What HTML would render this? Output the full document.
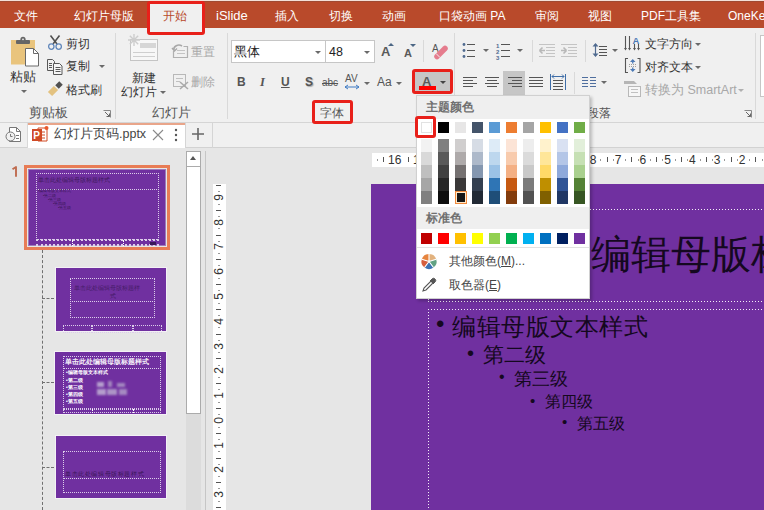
<!DOCTYPE html>
<html><head><meta charset="utf-8">
<style>
*{margin:0;padding:0;box-sizing:border-box}
html,body{width:764px;height:510px;overflow:hidden;background:#E6E6E6;font-family:"Liberation Sans",sans-serif;color:#444;position:relative}
.a{position:absolute}
.t{position:absolute;white-space:nowrap;line-height:1}
.tab{position:absolute;top:10px;font-size:12px;color:#fff;line-height:1;white-space:nowrap}
.sep{position:absolute;width:1px;background:#D9D9D9}
.lbl{position:absolute;font-size:12px;color:#555;line-height:1;white-space:nowrap}
.arr{position:absolute;width:0;height:0;border-left:3px solid transparent;border-right:3px solid transparent;border-top:3px solid #6A6A6A}
.redbox{position:absolute;border:3px solid #E8201A;border-radius:3px;z-index:50}
.sw{position:absolute;width:12px}
.dot{position:absolute;border:1px dotted #fff}
svg{position:absolute;overflow:visible}
</style></head><body>

<!-- ============ TAB BAR ============ -->
<div class="a" style="left:0;top:0;width:764px;height:1px;background:#F3E0D8"></div>
<div class="a" style="left:0;top:1px;width:764px;height:27px;background:#B94A2B"></div>
<div class="a" style="left:0;top:1px;width:764px;height:1px;background:#A04A32"></div>
<div class="tab" style="left:14px">文件</div>
<div class="tab" style="left:74px">幻灯片母版</div>
<div class="a" style="left:149px;top:4px;width:54px;height:30px;background:#F0F0F0;z-index:2"></div>
<div class="tab" style="left:163px;color:#B94A2B;z-index:3">开始</div>
<div class="redbox" style="left:147px;top:1px;width:58px;height:34px"></div>
<div class="tab" style="left:216px;top:9px;font-size:13px">iSlide</div>
<div class="tab" style="left:275px">插入</div>
<div class="tab" style="left:329px">切换</div>
<div class="tab" style="left:382px">动画</div>
<div class="tab" style="left:439px">口袋动画 PA</div>
<div class="tab" style="left:535px">审阅</div>
<div class="tab" style="left:588px">视图</div>
<div class="tab" style="left:641px">PDF工具集</div>
<div class="tab" style="left:728px">OneKey</div>

<!-- ============ RIBBON ============ -->
<div class="a" style="left:0;top:28px;width:764px;height:94px;background:#F0F0F0"></div>
<div class="a" style="left:0;top:122px;width:764px;height:1px;background:#D5D5D5"></div>

<!-- clipboard group -->
<svg style="left:10px;top:36px" width="32" height="32" viewBox="0 0 32 32">
  <rect x="1" y="4" width="24" height="24.5" fill="#E9C47D"/>
  <rect x="6" y="4" width="14" height="4" rx="1" fill="#666"/>
  <circle cx="13" cy="3.3" r="2.6" fill="#666"/>
  <circle cx="13" cy="3.3" r="0.9" fill="#F0F0F0"/>
  <path d="M15.5 12.5 h8 l5 5 v12.5 h-13 z" fill="#fff" stroke="#6A6A6A" stroke-width="1"/>
  <path d="M23.5 12.5 v5 h5" fill="none" stroke="#6A6A6A" stroke-width="1"/>
</svg>
<div class="lbl" style="left:10px;top:71px;font-size:12.5px;color:#333">粘贴</div>
<div class="arr" style="left:21px;top:90px"></div>
<svg style="left:47px;top:35px" width="16" height="16" viewBox="0 0 16 16">
  <path d="M3.5 0.5 L10 9 M12.5 0.5 L6 9" stroke="#505050" stroke-width="1.6"/>
  <circle cx="4.3" cy="11.6" r="2.7" fill="#F0F0F0" stroke="#6288BB" stroke-width="1.3"/>
  <circle cx="11.7" cy="11.6" r="2.7" fill="#F0F0F0" stroke="#6288BB" stroke-width="1.3"/>
</svg>
<div class="lbl" style="left:66px;top:38px;color:#333">剪切</div>
<svg style="left:46px;top:58px" width="18" height="17" viewBox="0 0 18 17">
  <path d="M1.5 1.5 h5 l2 2 v9 h-7 z" fill="#F0F0F0" stroke="#585858"/>
  <path d="M3 5.5h3M3 7.5h3M3 9.5h3" stroke="#585858"/>
  <path d="M7.5 5.5 h6 l2.5 2.5 v8.5 h-8.5 z" fill="#F5F5F5" stroke="#585858"/>
  <path d="M9.5 9.5h5M9.5 11.5h5M9.5 13.5h5" stroke="#585858"/>
</svg>
<div class="lbl" style="left:66px;top:60px;color:#333">复制</div>
<div class="arr" style="left:99px;top:65px"></div>
<svg style="left:46px;top:81px" width="18" height="16" viewBox="0 0 18 16">
  <path d="M4 13 L10 7" stroke="#E3C280" stroke-width="6" stroke-linecap="butt"/>
  <path d="M11 6 L15 2" stroke="#505050" stroke-width="5" stroke-linecap="butt"/>
</svg>
<div class="lbl" style="left:66px;top:84px;color:#333">格式刷</div>
<div class="lbl" style="left:29px;top:107px;font-size:12.5px">剪贴板</div>
<svg style="left:103px;top:110px" width="8" height="8" viewBox="0 0 8 8">
  <path d="M0.5 0.5 h7 v7" fill="none" stroke="#888"/>
  <path d="M2 2 L6.5 6.5 M3.5 6.5 h3 v-3" fill="none" stroke="#666"/>
</svg>
<div class="sep" style="left:115px;top:33px;height:86px"></div>

<!-- slides group -->
<svg style="left:127px;top:33px" width="34" height="30" viewBox="0 0 34 30">
  <rect x="3.5" y="6.5" width="27" height="21" fill="#F7F7F7" stroke="#C4C4C4"/>
  <rect x="13" y="10" width="16" height="5" fill="#D6D6D6"/>
  <path d="M6 19.5h22M6 23.5h22" stroke="#CFCFCF"/>
  <path d="M7 1 v12 M1 7 h12 M2.8 2.8 l8.4 8.4 M11.2 2.8 l-8.4 8.4" stroke="#CDCDCD" stroke-width="1.4"/>
</svg>
<div class="lbl" style="left:132px;top:72px;font-size:12px;color:#333">新建</div>
<div class="lbl" style="left:121px;top:86px;font-size:12px;color:#333">幻灯片</div>
<div class="arr" style="left:160px;top:91px"></div>
<svg style="left:171px;top:43px" width="18" height="16" viewBox="0 0 18 16">
  <path d="M2.5 8 v6.5 h14 v-11 h-4" fill="none" stroke="#B0B0B0" stroke-width="1.2"/>
  <path d="M6 7.5h8M6 10.5h8" stroke="#C4C4C4"/>
  <path d="M3 7 a5 4 0 0 1 8 -4" fill="none" stroke="#A8A8A8" stroke-width="1.6"/>
  <path d="M1 5 l2.5 3 l2.5 -2.5" fill="none" stroke="#A8A8A8" stroke-width="1.4"/>
</svg>
<div class="lbl" style="left:191px;top:46px;font-size:12px;color:#A8A8A8">重置</div>
<svg style="left:172px;top:73px" width="18" height="17" viewBox="0 0 18 17">
  <rect x="1.5" y="1.5" width="12" height="12" fill="none" stroke="#B8B8B8"/>
  <path d="M4 5.5h7M4 8.5h4" stroke="#C0C0C0"/>
  <path d="M8 9 L16 16 M16 9 L8 16" stroke="#AAAAAA" stroke-width="1.6"/>
</svg>
<div class="lbl" style="left:191px;top:76px;font-size:12px;color:#A8A8A8">删除</div>
<div class="lbl" style="left:152px;top:107px;font-size:12.5px">幻灯片</div>
<div class="sep" style="left:227px;top:33px;height:86px"></div>

<!-- font group -->
<div class="a" style="left:231px;top:40px;width:95px;height:23px;background:#fff;border:1px solid #C6C6C6"></div>
<div class="lbl" style="left:234px;top:46px;font-size:12.5px;color:#222">黑体</div>
<div class="arr" style="left:315px;top:51px"></div>
<div class="a" style="left:325px;top:40px;width:50px;height:23px;background:#fff;border:1px solid #C6C6C6"></div>
<div class="lbl" style="left:329px;top:46px;font-size:12.5px;color:#222">48</div>
<div class="arr" style="left:364px;top:51px"></div>
<div class="t" style="left:381px;top:45px;font-size:13px;font-weight:bold;color:#5A5A5A">A</div>
<div class="a" style="left:388px;top:43px;width:0;height:0;border-left:3.5px solid transparent;border-right:3.5px solid transparent;border-bottom:3.5px solid #4C6785"></div>
<div class="t" style="left:404px;top:48px;font-size:11px;font-weight:bold;color:#5A5A5A">A</div>
<div class="a" style="left:410px;top:43.5px;width:0;height:0;border-left:3.5px solid transparent;border-right:3.5px solid transparent;border-top:3.5px solid #4C6785"></div>
<div class="sep" style="left:423px;top:40px;height:22px"></div>
<svg style="left:430px;top:42px" width="20" height="20" viewBox="0 0 20 20">
  <text x="2" y="10" font-size="10" font-family="Liberation Sans" fill="#555">A</text>
  <path d="M7 14.5 L15 6.5" stroke="#E57C8D" stroke-width="5.5" stroke-linecap="round"/>
  <path d="M6 11.5 L10 15.5" stroke="#F0F0F0" stroke-width="1"/>
</svg>
<div class="sep" style="left:454px;top:33px;height:86px"></div>

<div class="t" style="left:237px;top:76px;font-size:12px;font-weight:bold;color:#555">B</div>
<div class="t" style="left:260px;top:76px;font-size:12.5px;font-style:italic;font-weight:bold;color:#555;font-family:'Liberation Serif',serif">I</div>
<div class="t" style="left:281px;top:76px;font-size:12px;font-weight:bold;color:#555;text-decoration:underline">U</div>
<div class="t" style="left:305px;top:76px;font-size:12px;font-weight:bold;color:#555;text-shadow:1px 1px 1px #aaa">S</div>
<div class="t" style="left:322px;top:78px;font-size:10px;color:#555;text-decoration:line-through">abc</div>
<div class="t" style="left:345px;top:74px;font-size:10px;color:#555">AV</div>
<svg style="left:344px;top:84px" width="16" height="6" viewBox="0 0 16 6">
  <path d="M1 3h14 M1 3 l3 -2 M1 3 l3 2 M15 3 l-3 -2 M15 3 l-3 2" stroke="#3F7BC3" stroke-width="1"/>
</svg>
<div class="arr" style="left:364px;top:82px"></div>
<div class="t" style="left:377px;top:76px;font-size:12px;color:#555">Aa</div>
<div class="arr" style="left:396px;top:82px"></div>

<!-- font color button -->
<div class="a" style="left:415px;top:72px;width:35px;height:20px;background:#C6C6C6"></div>
<div class="t" style="left:422px;top:75px;font-size:13px;font-weight:bold;color:#5A5A5A">A</div>
<div class="a" style="left:419px;top:86px;width:17px;height:4px;background:#FF0000"></div>
<div class="arr" style="left:440px;top:81px;border-top-color:#444"></div>
<div class="redbox" style="left:412px;top:69px;width:41px;height:25px"></div>

<div class="lbl" style="left:320px;top:107px">字体</div>
<div class="redbox" style="left:312px;top:100px;width:41px;height:24px"></div>
<svg style="left:441px;top:110px" width="8" height="8" viewBox="0 0 8 8">
  <path d="M0.5 0.5 h7 v7" fill="none" stroke="#888"/>
  <path d="M2 2 L6.5 6.5 M3.5 6.5 h3 v-3" fill="none" stroke="#666"/>
</svg>

<!-- paragraph group -->
<svg style="left:462px;top:42px" width="16" height="16" viewBox="0 0 16 16">
  <circle cx="2" cy="2.5" r="1.4" fill="#4F6A8F"/><circle cx="2" cy="8.5" r="1.4" fill="#4F6A8F"/><circle cx="2" cy="14.5" r="1.4" fill="#4F6A8F"/>
  <path d="M5 2.5h8M5 8.5h8M5 14.5h8" stroke="#555"/>
</svg>
<div class="arr" style="left:483px;top:49px"></div>
<svg style="left:496px;top:42px" width="16" height="16" viewBox="0 0 16 16">
  <text x="0" y="5.5" font-size="6" font-weight="bold" font-family="Liberation Sans" fill="#4F6A8F">1</text>
  <text x="0" y="11.5" font-size="6" font-weight="bold" font-family="Liberation Sans" fill="#4F6A8F">2</text>
  <text x="0" y="17.5" font-size="6" font-weight="bold" font-family="Liberation Sans" fill="#4F6A8F">3</text>
  <path d="M5 2.5h9M5 8.5h9M5 14.5h9" stroke="#555"/>
</svg>
<div class="arr" style="left:517px;top:49px"></div>
<div class="sep" style="left:532px;top:40px;height:22px"></div>
<svg style="left:538px;top:43px" width="18" height="15" viewBox="0 0 18 15">
  <path d="M1 1.5h16M8 4.5h9M8 7.5h9M8 10.5h9M1 13.5h16" stroke="#C4C4C4"/>
  <path d="M1.5 7.5h5.5 M1.5 7.5l3 -3 M1.5 7.5l3 3" stroke="#B8B8B8" stroke-width="1.6" fill="none"/>
</svg>
<svg style="left:560px;top:43px" width="18" height="15" viewBox="0 0 18 15">
  <path d="M1 1.5h16M8 4.5h9M8 7.5h9M8 10.5h9M1 13.5h16" stroke="#C4C4C4"/>
  <path d="M1 7.5h5.5 M6.5 7.5l-3 -3 M6.5 7.5l-3 3" stroke="#B8B8B8" stroke-width="1.6" fill="none"/>
</svg>
<div class="sep" style="left:585px;top:40px;height:22px"></div>
<svg style="left:592px;top:42px" width="16" height="16" viewBox="0 0 16 16">
  <path d="M3.5 2v12" stroke="#4F6A8F" stroke-width="1.2"/>
  <path d="M0.5 4.5 L3.5 1 L6.5 4.5 z M0.5 11.5 L3.5 15 L6.5 11.5 z" fill="#4F6A8F"/>
  <path d="M7 4.5h8M7 7.5h8M7 10.5h8M7 13.5h8" stroke="#555"/>
</svg>
<div class="arr" style="left:612px;top:49px"></div>

<svg style="left:624px;top:35px" width="18" height="17" viewBox="0 0 18 17">
  <path d="M1.5 1v13M5.5 1v13M10.5 9v5M14.5 9v5" stroke="#555" stroke-width="1.1"/>
  <path d="M0 13l1.5 2.5l1.5 -2.5zM4 13l1.5 2.5l1.5 -2.5zM9 13l1.5 2.5l1.5 -2.5zM13 13l1.5 2.5l1.5 -2.5z" fill="#555"/>
  <text x="8.5" y="8.5" font-size="9.5" font-weight="bold" font-family="Liberation Sans" fill="#4C7AB5">A</text>
</svg>
<div class="lbl" style="left:645px;top:38px;font-size:12px;color:#333">文字方向</div>
<div class="arr" style="left:695px;top:43px"></div>
<svg style="left:624px;top:57px" width="18" height="17" viewBox="0 0 18 17">
  <path d="M4 1.5h-2.5v14h2.5 M13.5 1.5h2.5v14h-2.5" stroke="#555" fill="none" stroke-width="1.1"/>
  <path d="M8.75 3v3.5 M8.75 10.5v3.5" stroke="#4C7AB5" stroke-width="1.3"/>
  <path d="M6 5l2.75 -3l2.75 3zM6 12l2.75 3l2.75 -3z" fill="#4C7AB5"/>
  <path d="M5 7.5h7.5M5 9.5h7.5" stroke="#8A8A8A" stroke-width="0.8" stroke-dasharray="1 1"/>
</svg>
<div class="lbl" style="left:645px;top:61px;font-size:12px;color:#333">对齐文本</div>
<div class="arr" style="left:695px;top:66px"></div>
<svg style="left:623px;top:80px" width="19" height="18" viewBox="0 0 19 18">
  <path d="M1 1h10l3 3h-13z" fill="#B5B5B5"/>
  <rect x="5.5" y="6.5" width="12" height="10" fill="#F6F6F6" stroke="#B8B8B8"/>
  <path d="M8 9.5h7M8 12.5h7" stroke="#C0C0C0"/>
</svg>
<div class="lbl" style="left:645px;top:84px;font-size:12.5px;color:#A8A8A8">转换为 SmartArt</div>
<div class="arr" style="left:738px;top:89px;border-top-color:#B0B0B0"></div>

<svg style="left:462px;top:76px" width="16" height="12" viewBox="0 0 16 12">
  <path d="M1 1.5h14M1 4.5h10M1 7.5h14M1 10.5h10" stroke="#555"/>
</svg>
<svg style="left:484px;top:76px" width="16" height="12" viewBox="0 0 16 12">
  <path d="M1 1.5h14M3 4.5h10M1 7.5h14M3 10.5h10" stroke="#555"/>
</svg>
<div class="a" style="left:503px;top:71px;width:22px;height:24px;background:#C6C6C6"></div>
<svg style="left:507px;top:76px" width="16" height="12" viewBox="0 0 16 12">
  <path d="M1 1.5h14M5 4.5h10M1 7.5h14M5 10.5h10" stroke="#555"/>
</svg>
<svg style="left:528px;top:76px" width="16" height="12" viewBox="0 0 16 12">
  <path d="M1 1.5h14M1 4.5h14M1 7.5h14M1 10.5h14" stroke="#555"/>
</svg>
<svg style="left:549px;top:73px" width="18" height="18" viewBox="0 0 18 18">
  <path d="M1.5 1v16M16.5 1v16" stroke="#3F6EA8"/>
  <path d="M3 3.5h12 M3 3.5l2 -2M3 3.5l2 2M15 3.5l-2 -2M15 3.5l-2 2" stroke="#3F6EA8" fill="none"/>
  <path d="M4 7.5h10M4 10.5h10M4 13.5h10M4 16.5h10" stroke="#555"/>
</svg>
<div class="sep" style="left:574px;top:72px;height:22px"></div>
<svg style="left:581px;top:76px" width="16" height="12" viewBox="0 0 16 12">
  <path d="M1 1.5h6M1 4.5h6M1 7.5h6M1 10.5h6M9 1.5h6M9 4.5h6M9 7.5h6M9 10.5h6" stroke="#4F6E9E"/>
</svg>
<div class="arr" style="left:601px;top:81px"></div>
<div class="lbl" style="left:587px;top:107px">段落</div>
<svg style="left:744px;top:110px" width="8" height="8" viewBox="0 0 8 8">
  <path d="M0.5 0.5 h7 v7" fill="none" stroke="#888"/>
  <path d="M2 2 L6.5 6.5 M3.5 6.5 h3 v-3" fill="none" stroke="#666"/>
</svg>
<div class="sep" style="left:755px;top:33px;height:86px"></div>
<div class="a" style="left:760px;top:35px;width:10px;height:62px;background:#fff;border:1px solid #C6C6C6"></div>

<!-- ============ DOC TAB ROW ============ -->
<div class="a" style="left:0;top:123px;width:764px;height:25px;background:#F0F0F0"></div>
<div class="a" style="left:0;top:147px;width:764px;height:1px;background:#D2D2D2"></div>
<svg style="left:5px;top:126px" width="17" height="17" viewBox="0 0 17 17">
  <path d="M4.5 1.5h7l4 4v10h-11z" fill="#fff" stroke="#777"/>
  <path d="M11.5 1.5v4h4" fill="none" stroke="#777"/>
  <circle cx="5.5" cy="10.5" r="4.5" fill="#F0F0F0" stroke="#777"/>
  <path d="M5.5 8v2.5h2" fill="none" stroke="#777"/>
  <path d="M11 9.5h3M11 12.5h3" stroke="#777"/>
</svg>
<div class="a" style="left:27px;top:123px;width:1px;height:25px;background:#D8D8D8"></div>
<div class="a" style="left:28px;top:123px;width:157px;height:25px;background:#fff"></div>
<div class="a" style="left:28px;top:123px;width:157px;height:2px;background:#E9A58A"></div>
<svg style="left:31px;top:126px" width="18" height="17" viewBox="0 0 18 17">
  <path d="M7 2 h9 v13 h-9z" fill="#fff" stroke="#D04A25" stroke-width="1"/>
  <path d="M10 6h4M10 9h4M10 12h4" stroke="#D04A25"/>
  <rect x="1" y="3" width="10" height="12" fill="#D04A25"/>
  <text x="2.2" y="13" font-size="10" font-weight="bold" font-family="Liberation Sans" fill="#fff">P</text>
  <circle cx="15.5" cy="2" r="2" fill="#E85A2E"/>
</svg>
<div class="lbl" style="left:54px;top:128px;font-size:12.5px;color:#444">幻灯片页码.pptx</div>
<svg style="left:152px;top:129px" width="12" height="12" viewBox="0 0 12 12">
  <path d="M1 1L11 11M11 1L1 11" stroke="#8A8A8A" stroke-width="1.1"/>
</svg>
<svg style="left:174px;top:128px" width="4" height="14" viewBox="0 0 4 14">
  <circle cx="2" cy="2" r="1.2" fill="#555"/><circle cx="2" cy="7" r="1.2" fill="#555"/><circle cx="2" cy="12" r="1.2" fill="#555"/>
</svg>
<div class="a" style="left:185px;top:123px;width:1px;height:25px;background:#D5D5D5"></div>
<svg style="left:192px;top:128px" width="12" height="12" viewBox="0 0 12 12">
  <path d="M6 0v12M0 6h12" stroke="#666" stroke-width="1.6"/>
</svg>
<div class="a" style="left:212px;top:123px;width:1px;height:25px;background:#D5D5D5"></div>

<!-- ============ LEFT PANE ============ -->
<svg style="left:10px;top:165px" width="10" height="14" viewBox="0 0 10 14"><path d="M2.5 4.3 L6 2 V11.8" fill="none" stroke="#BF6C50" stroke-width="1.9" stroke-linejoin="round"/></svg>
<div class="a" style="left:24px;top:165px;width:146px;height:85px;border:3.5px solid #E87C55"></div>
<div class="a" style="left:28px;top:169px;width:138px;height:77px;background:#7030A0;border:1px solid #9D7AB8"></div>
<div class="dot" style="left:36px;top:173px;width:123px;height:17px;border-color:#DCCDEA"></div>
<div class="dot" style="left:36px;top:189px;width:123px;height:51px;border-color:#DCCDEA"></div>
<div class="dot" style="left:36px;top:239px;width:123px;height:7px;border-color:#DCCDEA;border-width:2px"></div>
<div class="t" style="left:38px;top:177px;font-size:6.25px;color:#40195F">单击此处编辑母版标题样式</div>
<div class="t" style="left:38px;top:189px;font-size:4.2px;color:#3A1658">•编辑母版文本样式</div>
<div class="t" style="left:43px;top:193.5px;font-size:4px;color:#3A1658">•第二级</div>
<div class="t" style="left:48px;top:198px;font-size:4px;color:#3A1658">•第三级</div>
<div class="t" style="left:53px;top:202px;font-size:4px;color:#3A1658">•第四级</div>
<div class="t" style="left:58px;top:206px;font-size:4px;color:#3A1658">•第五级</div>
<div class="a" style="left:72px;top:240px;width:1px;height:6px;border-left:1px dotted #fff"></div>
<div class="a" style="left:123px;top:240px;width:1px;height:6px;border-left:1px dotted #fff"></div>
<div class="a" style="left:150px;top:242px;width:6px;height:3px;background:#3A1858"></div>
<div class="a" style="left:42px;top:250px;width:0;height:260px;border-left:1px dashed #707070"></div>
<div class="a" style="left:42px;top:298px;width:12px;height:0;border-top:1px dashed #707070"></div>
<div class="a" style="left:42px;top:382px;width:12px;height:0;border-top:1px dashed #707070"></div>
<div class="a" style="left:42px;top:467px;width:12px;height:0;border-top:1px dashed #707070"></div>

<!-- thumb 2 -->
<div class="a" style="left:55px;top:267px;width:112px;height:65px;background:#7030A0;border:1px solid #F4F0F6"></div>
<div class="dot" style="left:70px;top:278px;width:85px;height:24px;border-color:#DCCDEA"></div>
<div class="dot" style="left:70px;top:301px;width:85px;height:17px;border-color:#DCCDEA"></div>
<div class="dot" style="left:63px;top:325px;width:29px;height:8px;border-color:#DCCDEA"></div>
<div class="dot" style="left:92px;top:325px;width:41px;height:8px;border-color:#DCCDEA"></div>
<div class="dot" style="left:133px;top:325px;width:29px;height:8px;border-color:#DCCDEA"></div>
<div class="t" style="left:74px;top:285px;font-size:6.4px;color:#461C68">单击此处编辑母版标题样</div><div class="t" style="left:110px;top:293px;font-size:6.4px;color:#461C68">式</div>

<!-- thumb 3 -->
<div class="a" style="left:54px;top:351px;width:113px;height:64px;background:#7030A0;border:1px solid #F4F0F6"></div>
<div class="dot" style="left:63px;top:356px;width:98px;height:13px;border-color:#DCCDEA"></div>
<div class="dot" style="left:63px;top:368px;width:98px;height:41px;border-color:#DCCDEA"></div>
<div class="dot" style="left:63px;top:409px;width:98px;height:4px;border-color:#DCCDEA"></div>
<div class="t" style="left:65px;top:357.5px;font-size:7px;font-weight:bold;color:#F4EEF8">单击此处编辑母版标题样式</div>
<div class="t" style="left:66px;top:370.5px;font-size:4.8px;font-weight:bold;color:#fff">•编辑母版文本样式</div>
<div class="t" style="left:66px;top:378.5px;font-size:4.8px;font-weight:bold;color:#fff">•第二级</div>
<div class="t" style="left:66px;top:385.5px;font-size:4.8px;font-weight:bold;color:#fff">•第三级</div>
<div class="t" style="left:66px;top:392.5px;font-size:4.8px;font-weight:bold;color:#fff">•第四级</div>
<div class="t" style="left:66px;top:399.5px;font-size:4.8px;font-weight:bold;color:#fff">•第五级</div>
<div class="a" style="left:97px;top:382px;width:7px;height:5px;background:#B9A5D0;filter:blur(1px);opacity:.95"></div>
<div class="a" style="left:108px;top:381px;width:4px;height:6px;background:#A58CC0;filter:blur(1px);opacity:.95"></div>
<div class="a" style="left:117px;top:383px;width:8px;height:4px;background:#A68DC2;filter:blur(1px);opacity:.95"></div>
<div class="a" style="left:97px;top:389px;width:9px;height:6px;background:#B8A3CF;filter:blur(1px);opacity:.95"></div>
<div class="a" style="left:107px;top:389px;width:10px;height:6px;background:#B09AC9;filter:blur(1px);opacity:.95"></div>
<div class="a" style="left:119px;top:389px;width:8px;height:6px;background:#A88FC3;filter:blur(1px);opacity:.95"></div>
<div class="a" style="left:92px;top:409px;width:1px;height:4px;border-left:1px dotted #fff"></div>
<div class="a" style="left:133px;top:409px;width:1px;height:4px;border-left:1px dotted #fff"></div>

<!-- thumb 4 -->
<div class="a" style="left:55px;top:435px;width:112px;height:64px;background:#7030A0;border:1px solid #F4F0F6"></div>
<div class="dot" style="left:63px;top:451px;width:98px;height:28px;border-color:#DCCDEA"></div>
<div class="dot" style="left:63px;top:478px;width:98px;height:15px;border-color:#DCCDEA"></div>
<div class="t" style="left:65px;top:471px;font-size:6.3px;letter-spacing:.6px;color:#3A1658">单击此处编辑母版标题样式</div>

<!-- scrollbar -->
<div class="a" style="left:186px;top:151px;width:15px;height:359px;background:#DCDCDC"></div>
<div class="a" style="left:186px;top:151px;width:15px;height:16px;background:#fff;border:1px solid #ABABAB"></div>
<div class="a" style="left:190px;top:156px;width:0;height:0;border-left:3.5px solid transparent;border-right:3.5px solid transparent;border-bottom:4px solid #555"></div>
<div class="a" style="left:186px;top:166px;width:15px;height:248px;background:#fff;border:1px solid #ABABAB"></div>
<div class="a" style="left:205px;top:151px;width:1px;height:359px;background:#C6C6C6"></div>

<!-- ============ CANVAS ============ -->
<div class="a" style="left:213px;top:184px;width:13px;height:326px;background:#fff"></div>
<div class="a" style="left:372px;top:153px;width:392px;height:14px;background:#fff"></div>
<div class="a" style="left:371px;top:184px;width:393px;height:326px;background:#7030A0"></div>
<div class="a" style="left:428px;top:209px;width:336px;height:1px;background:repeating-linear-gradient(90deg,#F4EEF8 0 1px,transparent 1px 3px)"></div>
<div class="a" style="left:428px;top:301px;width:336px;height:1px;background:repeating-linear-gradient(90deg,#F4EEF8 0 1px,transparent 1px 3px)"></div>
<div class="a" style="left:428px;top:209px;width:1px;height:93px;background:repeating-linear-gradient(180deg,#F4EEF8 0 1px,transparent 1px 3px)"></div>
<div class="a" style="left:428px;top:309px;width:336px;height:1px;background:repeating-linear-gradient(90deg,#F4EEF8 0 1px,transparent 1px 3px)"></div>
<div class="a" style="left:428px;top:309px;width:1px;height:201px;background:repeating-linear-gradient(180deg,#F4EEF8 0 1px,transparent 1px 3px)"></div>

<div class="t" style="left:591px;top:234px;font-size:40px;color:#150820">编辑母版标题样式</div>
<div class="t" style="left:436px;top:312px;font-size:24px;color:#150820">•</div>
<div class="t" style="left:452px;top:314.5px;font-size:24.4px;letter-spacing:0.55px;color:#150820">编辑母版文本样式</div>
<div class="t" style="left:467px;top:343px;font-size:20px;color:#150820">•</div>
<div class="t" style="left:483px;top:345px;font-size:21.3px;color:#150820">第二级</div>
<div class="t" style="left:499px;top:369px;font-size:16px;color:#150820">•</div>
<div class="t" style="left:514px;top:371px;font-size:17.7px;color:#150820">第三级</div>
<div class="t" style="left:530px;top:393px;font-size:15px;color:#150820">•</div>
<div class="t" style="left:545px;top:393px;font-size:16.3px;color:#150820">第四级</div>
<div class="t" style="left:562px;top:414px;font-size:15px;color:#150820">•</div>
<div class="t" style="left:577px;top:414.5px;font-size:16.2px;color:#150820">第五级</div>

<div id="rulers" class="a" style="left:0;top:0;z-index:5"><div class="t" style="left:756.8000000000001px;top:154px;width:20px;text-align:center;font-size:12px;color:#333">1</div><div class="a" style="left:755px;top:157px;width:1px;height:5px;background:#555"></div><div class="a" style="left:762px;top:159px;width:1px;height:2px;background:#999"></div><div class="a" style="left:749px;top:159px;width:1px;height:2px;background:#999"></div><div class="t" style="left:732px;top:154px;width:20px;text-align:center;font-size:12px;color:#333">2</div><div class="a" style="left:731px;top:157px;width:1px;height:5px;background:#555"></div><div class="a" style="left:737px;top:159px;width:1px;height:2px;background:#999"></div><div class="a" style="left:724px;top:159px;width:1px;height:2px;background:#999"></div><div class="t" style="left:707.2px;top:154px;width:20px;text-align:center;font-size:12px;color:#333">3</div><div class="a" style="left:706px;top:157px;width:1px;height:5px;background:#555"></div><div class="a" style="left:712px;top:159px;width:1px;height:2px;background:#999"></div><div class="a" style="left:700px;top:159px;width:1px;height:2px;background:#999"></div><div class="t" style="left:682.4px;top:154px;width:20px;text-align:center;font-size:12px;color:#333">4</div><div class="a" style="left:681px;top:157px;width:1px;height:5px;background:#555"></div><div class="a" style="left:687px;top:159px;width:1px;height:2px;background:#999"></div><div class="a" style="left:675px;top:159px;width:1px;height:2px;background:#999"></div><div class="t" style="left:657.6px;top:154px;width:20px;text-align:center;font-size:12px;color:#333">5</div><div class="a" style="left:656px;top:157px;width:1px;height:5px;background:#555"></div><div class="a" style="left:662px;top:159px;width:1px;height:2px;background:#999"></div><div class="a" style="left:650px;top:159px;width:1px;height:2px;background:#999"></div><div class="t" style="left:632.8px;top:154px;width:20px;text-align:center;font-size:12px;color:#333">6</div><div class="a" style="left:631px;top:157px;width:1px;height:5px;background:#555"></div><div class="a" style="left:638px;top:159px;width:1px;height:2px;background:#999"></div><div class="a" style="left:625px;top:159px;width:1px;height:2px;background:#999"></div><div class="t" style="left:608px;top:154px;width:20px;text-align:center;font-size:12px;color:#333">7</div><div class="a" style="left:607px;top:157px;width:1px;height:5px;background:#555"></div><div class="a" style="left:613px;top:159px;width:1px;height:2px;background:#999"></div><div class="a" style="left:600px;top:159px;width:1px;height:2px;background:#999"></div><div class="t" style="left:583.2px;top:154px;width:20px;text-align:center;font-size:12px;color:#333">8</div><div class="a" style="left:582px;top:157px;width:1px;height:5px;background:#555"></div><div class="a" style="left:588px;top:159px;width:1px;height:2px;background:#999"></div><div class="a" style="left:576px;top:159px;width:1px;height:2px;background:#999"></div><div class="t" style="left:558.4px;top:154px;width:20px;text-align:center;font-size:12px;color:#333">9</div><div class="a" style="left:557px;top:157px;width:1px;height:5px;background:#555"></div><div class="a" style="left:563px;top:159px;width:1px;height:2px;background:#999"></div><div class="t" style="left:533.6px;top:154px;width:20px;text-align:center;font-size:12px;color:#333">10</div><div class="a" style="left:532px;top:157px;width:1px;height:5px;background:#555"></div><div class="t" style="left:508.79999999999995px;top:154px;width:20px;text-align:center;font-size:12px;color:#333">11</div><div class="a" style="left:507px;top:157px;width:1px;height:5px;background:#555"></div><div class="t" style="left:484px;top:154px;width:20px;text-align:center;font-size:12px;color:#333">12</div><div class="a" style="left:483px;top:157px;width:1px;height:5px;background:#555"></div><div class="t" style="left:459.2px;top:154px;width:20px;text-align:center;font-size:12px;color:#333">13</div><div class="a" style="left:458px;top:157px;width:1px;height:5px;background:#555"></div><div class="t" style="left:434.40000000000003px;top:154px;width:20px;text-align:center;font-size:12px;color:#333">14</div><div class="a" style="left:433px;top:157px;width:1px;height:5px;background:#555"></div><div class="t" style="left:409.6px;top:154px;width:20px;text-align:center;font-size:12px;color:#333">15</div><div class="a" style="left:408px;top:157px;width:1px;height:5px;background:#555"></div><div class="t" style="left:384.8px;top:154px;width:20px;text-align:center;font-size:12px;color:#333">16</div><div class="a" style="left:383px;top:157px;width:1px;height:5px;background:#555"></div><div class="a" style="left:377px;top:159px;width:1px;height:2px;background:#999"></div><div class="a" style="left:216px;top:185px;width:5px;height:1px;background:#555"></div><div class="a" style="left:218px;top:191px;width:2px;height:1px;background:#999"></div><div class="t" style="left:209px;top:191.83px;width:20px;height:11px;text-align:center;font-size:12px;line-height:11px;color:#333;transform:rotate(-90deg)">9</div><div class="a" style="left:216px;top:210px;width:5px;height:1px;background:#555"></div><div class="a" style="left:218px;top:204px;width:2px;height:1px;background:#999"></div><div class="a" style="left:218px;top:216px;width:2px;height:1px;background:#999"></div><div class="t" style="left:209px;top:216.61px;width:20px;height:11px;text-align:center;font-size:12px;line-height:11px;color:#333;transform:rotate(-90deg)">8</div><div class="a" style="left:216px;top:235px;width:5px;height:1px;background:#555"></div><div class="a" style="left:218px;top:228px;width:2px;height:1px;background:#999"></div><div class="a" style="left:218px;top:241px;width:2px;height:1px;background:#999"></div><div class="t" style="left:209px;top:241.39000000000001px;width:20px;height:11px;text-align:center;font-size:12px;line-height:11px;color:#333;transform:rotate(-90deg)">7</div><div class="a" style="left:216px;top:259px;width:5px;height:1px;background:#555"></div><div class="a" style="left:218px;top:253px;width:2px;height:1px;background:#999"></div><div class="a" style="left:218px;top:265px;width:2px;height:1px;background:#999"></div><div class="t" style="left:209px;top:266.17px;width:20px;height:11px;text-align:center;font-size:12px;line-height:11px;color:#333;transform:rotate(-90deg)">6</div><div class="a" style="left:216px;top:284px;width:5px;height:1px;background:#555"></div><div class="a" style="left:218px;top:278px;width:2px;height:1px;background:#999"></div><div class="a" style="left:218px;top:290px;width:2px;height:1px;background:#999"></div><div class="t" style="left:209px;top:290.95000000000005px;width:20px;height:11px;text-align:center;font-size:12px;line-height:11px;color:#333;transform:rotate(-90deg)">5</div><div class="a" style="left:216px;top:309px;width:5px;height:1px;background:#555"></div><div class="a" style="left:218px;top:303px;width:2px;height:1px;background:#999"></div><div class="a" style="left:218px;top:315px;width:2px;height:1px;background:#999"></div><div class="t" style="left:209px;top:315.73px;width:20px;height:11px;text-align:center;font-size:12px;line-height:11px;color:#333;transform:rotate(-90deg)">4</div><div class="a" style="left:216px;top:334px;width:5px;height:1px;background:#555"></div><div class="a" style="left:218px;top:327px;width:2px;height:1px;background:#999"></div><div class="a" style="left:218px;top:340px;width:2px;height:1px;background:#999"></div><div class="t" style="left:209px;top:340.51px;width:20px;height:11px;text-align:center;font-size:12px;line-height:11px;color:#333;transform:rotate(-90deg)">3</div><div class="a" style="left:216px;top:358px;width:5px;height:1px;background:#555"></div><div class="a" style="left:218px;top:352px;width:2px;height:1px;background:#999"></div><div class="a" style="left:218px;top:365px;width:2px;height:1px;background:#999"></div><div class="t" style="left:209px;top:365.29px;width:20px;height:11px;text-align:center;font-size:12px;line-height:11px;color:#333;transform:rotate(-90deg)">2</div><div class="a" style="left:216px;top:383px;width:5px;height:1px;background:#555"></div><div class="a" style="left:218px;top:377px;width:2px;height:1px;background:#999"></div><div class="a" style="left:218px;top:389px;width:2px;height:1px;background:#999"></div><div class="t" style="left:209px;top:390.07000000000005px;width:20px;height:11px;text-align:center;font-size:12px;line-height:11px;color:#333;transform:rotate(-90deg)">1</div><div class="a" style="left:216px;top:408px;width:5px;height:1px;background:#555"></div><div class="a" style="left:218px;top:402px;width:2px;height:1px;background:#999"></div><div class="a" style="left:218px;top:414px;width:2px;height:1px;background:#999"></div><div class="t" style="left:209px;top:414.85px;width:20px;height:11px;text-align:center;font-size:12px;line-height:11px;color:#333;transform:rotate(-90deg)">0</div><div class="a" style="left:216px;top:433px;width:5px;height:1px;background:#555"></div><div class="a" style="left:218px;top:427px;width:2px;height:1px;background:#999"></div><div class="a" style="left:218px;top:439px;width:2px;height:1px;background:#999"></div><div class="t" style="left:209px;top:439.63px;width:20px;height:11px;text-align:center;font-size:12px;line-height:11px;color:#333;transform:rotate(-90deg)">1</div><div class="a" style="left:216px;top:458px;width:5px;height:1px;background:#555"></div><div class="a" style="left:218px;top:451px;width:2px;height:1px;background:#999"></div><div class="a" style="left:218px;top:464px;width:2px;height:1px;background:#999"></div><div class="t" style="left:209px;top:464.41px;width:20px;height:11px;text-align:center;font-size:12px;line-height:11px;color:#333;transform:rotate(-90deg)">2</div><div class="a" style="left:216px;top:482px;width:5px;height:1px;background:#555"></div><div class="a" style="left:218px;top:476px;width:2px;height:1px;background:#999"></div><div class="a" style="left:218px;top:488px;width:2px;height:1px;background:#999"></div><div class="t" style="left:209px;top:489.19000000000005px;width:20px;height:11px;text-align:center;font-size:12px;line-height:11px;color:#333;transform:rotate(-90deg)">3</div><div class="a" style="left:216px;top:507px;width:5px;height:1px;background:#555"></div><div class="a" style="left:218px;top:501px;width:2px;height:1px;background:#999"></div></div>

<!-- ============ COLOR PANEL ============ -->
<div id="panel" class="a" style="left:416px;top:95px;width:174px;height:204px;background:#fff;border:1px solid #D0D0D0;box-shadow:2px 2px 3px rgba(0,0,0,.22);z-index:20"></div>
<div class="a" style="left:417px;top:96px;width:172px;height:23px;background:#EFEFEF;z-index:21"></div>
<div class="lbl" style="left:426px;top:101px;font-weight:bold;color:#707070;z-index:22">主题颜色</div>
<div id="grid" class="a" style="left:0;top:0;z-index:22"><div style="position:absolute;left:421px;top:122px;width:11px;height:11px;background:#FFFFFF;outline:1px solid #E2E2E2;outline-offset:-1px"></div><div style="position:absolute;left:421px;top:139px;width:11px;height:13px;background:#F2F2F2"></div><div style="position:absolute;left:421px;top:152px;width:11px;height:13px;background:#D9D9D9"></div><div style="position:absolute;left:421px;top:165px;width:11px;height:13px;background:#BFBFBF"></div><div style="position:absolute;left:421px;top:178px;width:11px;height:13px;background:#A6A6A6"></div><div style="position:absolute;left:421px;top:191px;width:11px;height:13px;background:#808080"></div><div style="position:absolute;left:421px;top:233px;width:11px;height:11px;background:#C00000"></div><div style="position:absolute;left:438px;top:122px;width:11px;height:11px;background:#000000"></div><div style="position:absolute;left:438px;top:139px;width:11px;height:13px;background:#808080"></div><div style="position:absolute;left:438px;top:152px;width:11px;height:13px;background:#595959"></div><div style="position:absolute;left:438px;top:165px;width:11px;height:13px;background:#404040"></div><div style="position:absolute;left:438px;top:178px;width:11px;height:13px;background:#262626"></div><div style="position:absolute;left:438px;top:191px;width:11px;height:13px;background:#0D0D0D"></div><div style="position:absolute;left:438px;top:233px;width:11px;height:11px;background:#FF0000"></div><div style="position:absolute;left:455px;top:122px;width:11px;height:11px;background:#E7E6E6"></div><div style="position:absolute;left:455px;top:139px;width:11px;height:13px;background:#D0CECE"></div><div style="position:absolute;left:455px;top:152px;width:11px;height:13px;background:#AEAAAA"></div><div style="position:absolute;left:455px;top:165px;width:11px;height:13px;background:#757171"></div><div style="position:absolute;left:455px;top:178px;width:11px;height:13px;background:#3A3838"></div><div style="position:absolute;left:455px;top:191px;width:11px;height:13px;background:#161616"></div><div style="position:absolute;left:455px;top:233px;width:11px;height:11px;background:#FFC000"></div><div style="position:absolute;left:472px;top:122px;width:11px;height:11px;background:#44546A"></div><div style="position:absolute;left:472px;top:139px;width:11px;height:13px;background:#D6DCE5"></div><div style="position:absolute;left:472px;top:152px;width:11px;height:13px;background:#ADB9CA"></div><div style="position:absolute;left:472px;top:165px;width:11px;height:13px;background:#8497B0"></div><div style="position:absolute;left:472px;top:178px;width:11px;height:13px;background:#333F50"></div><div style="position:absolute;left:472px;top:191px;width:11px;height:13px;background:#222A35"></div><div style="position:absolute;left:472px;top:233px;width:11px;height:11px;background:#FFFF00"></div><div style="position:absolute;left:489px;top:122px;width:11px;height:11px;background:#5B9BD5"></div><div style="position:absolute;left:489px;top:139px;width:11px;height:13px;background:#DDEBF7"></div><div style="position:absolute;left:489px;top:152px;width:11px;height:13px;background:#BDD7EE"></div><div style="position:absolute;left:489px;top:165px;width:11px;height:13px;background:#9BC2E6"></div><div style="position:absolute;left:489px;top:178px;width:11px;height:13px;background:#2F75B5"></div><div style="position:absolute;left:489px;top:191px;width:11px;height:13px;background:#1F4E78"></div><div style="position:absolute;left:489px;top:233px;width:11px;height:11px;background:#92D050"></div><div style="position:absolute;left:506px;top:122px;width:11px;height:11px;background:#ED7D31"></div><div style="position:absolute;left:506px;top:139px;width:11px;height:13px;background:#FCE4D6"></div><div style="position:absolute;left:506px;top:152px;width:11px;height:13px;background:#F8CBAD"></div><div style="position:absolute;left:506px;top:165px;width:11px;height:13px;background:#F4B084"></div><div style="position:absolute;left:506px;top:178px;width:11px;height:13px;background:#C65911"></div><div style="position:absolute;left:506px;top:191px;width:11px;height:13px;background:#833C0C"></div><div style="position:absolute;left:506px;top:233px;width:11px;height:11px;background:#00B050"></div><div style="position:absolute;left:523px;top:122px;width:11px;height:11px;background:#A5A5A5"></div><div style="position:absolute;left:523px;top:139px;width:11px;height:13px;background:#EDEDED"></div><div style="position:absolute;left:523px;top:152px;width:11px;height:13px;background:#DBDBDB"></div><div style="position:absolute;left:523px;top:165px;width:11px;height:13px;background:#C9C9C9"></div><div style="position:absolute;left:523px;top:178px;width:11px;height:13px;background:#7B7B7B"></div><div style="position:absolute;left:523px;top:191px;width:11px;height:13px;background:#525252"></div><div style="position:absolute;left:523px;top:233px;width:11px;height:11px;background:#00B0F0"></div><div style="position:absolute;left:540px;top:122px;width:11px;height:11px;background:#FFC000"></div><div style="position:absolute;left:540px;top:139px;width:11px;height:13px;background:#FFF2CC"></div><div style="position:absolute;left:540px;top:152px;width:11px;height:13px;background:#FFE699"></div><div style="position:absolute;left:540px;top:165px;width:11px;height:13px;background:#FFD966"></div><div style="position:absolute;left:540px;top:178px;width:11px;height:13px;background:#BF8F00"></div><div style="position:absolute;left:540px;top:191px;width:11px;height:13px;background:#806000"></div><div style="position:absolute;left:540px;top:233px;width:11px;height:11px;background:#0070C0"></div><div style="position:absolute;left:557px;top:122px;width:11px;height:11px;background:#4472C4"></div><div style="position:absolute;left:557px;top:139px;width:11px;height:13px;background:#D9E1F2"></div><div style="position:absolute;left:557px;top:152px;width:11px;height:13px;background:#B4C6E7"></div><div style="position:absolute;left:557px;top:165px;width:11px;height:13px;background:#8EA9DB"></div><div style="position:absolute;left:557px;top:178px;width:11px;height:13px;background:#305496"></div><div style="position:absolute;left:557px;top:191px;width:11px;height:13px;background:#203764"></div><div style="position:absolute;left:557px;top:233px;width:11px;height:11px;background:#002060"></div><div style="position:absolute;left:574px;top:122px;width:11px;height:11px;background:#70AD47"></div><div style="position:absolute;left:574px;top:139px;width:11px;height:13px;background:#E2EFDA"></div><div style="position:absolute;left:574px;top:152px;width:11px;height:13px;background:#C6E0B4"></div><div style="position:absolute;left:574px;top:165px;width:11px;height:13px;background:#A9D08E"></div><div style="position:absolute;left:574px;top:178px;width:11px;height:13px;background:#548235"></div><div style="position:absolute;left:574px;top:191px;width:11px;height:13px;background:#375623"></div><div style="position:absolute;left:574px;top:233px;width:11px;height:11px;background:#7030A0"></div><div style="position:absolute;left:455px;top:191px;width:12px;height:13px;border:1px solid #F08A3C;box-shadow:inset 0 0 0 1px #FFE8C8"></div></div>
<div class="a" style="left:417px;top:207px;width:172px;height:22px;background:#EFEFEF;z-index:21"></div>
<div class="lbl" style="left:426px;top:212px;font-weight:bold;color:#707070;z-index:22">标准色</div>
<div id="std" class="a" style="left:0;top:0;z-index:22"></div>
<div class="a" style="left:417px;top:247px;width:172px;height:1px;background:#E2E2E2;z-index:22"></div>
<svg style="left:421px;top:253px;z-index:22" width="16" height="16" viewBox="0 0 16 16">
  <path d="M8 8.5 L8 1 A7.5 7.5 0 0 1 15.2 6.2 z" fill="#E2B27E"/>
  <path d="M8 8.5 L15.2 6.2 A7.5 7.5 0 0 1 12.5 14.5 z" fill="#62A283"/>
  <path d="M8 8.5 L12.5 14.5 A7.5 7.5 0 0 1 3.5 14.5 z" fill="#3C72B3"/>
  <path d="M8 8.5 L3.5 14.5 A7.5 7.5 0 0 1 0.8 6.2 z" fill="#D45E3E"/>
  <path d="M8 8.5 L0.8 6.2 A7.5 7.5 0 0 1 8 1 z" fill="#E6853F"/>
  <path d="M8 8.5 L8 1 M8 8.5 L15.2 6.2 M8 8.5 L12.5 14.5 M8 8.5 L3.5 14.5 M8 8.5 L0.8 6.2" stroke="#fff" stroke-width="1.1"/>
</svg>
<div class="lbl" style="left:449px;top:255px;font-size:12px;color:#444;z-index:22">其他颜色(<u>M</u>)...</div>
<svg style="left:421px;top:277px;z-index:22" width="16" height="16" viewBox="0 0 16 16">
  <path d="M2 14 L3 11 L10 4 L12 6 L5 13 z" fill="none" stroke="#555" stroke-width="1.1"/>
  <path d="M9 3 L13 7 M11 2 a2 2 0 0 1 3 3 l-1.5 1.5 l-3 -3 z" fill="#555" stroke="#555"/>
</svg>
<div class="lbl" style="left:449px;top:279px;font-size:12px;color:#444;z-index:22">取色器(<u>E</u>)</div>
<div class="redbox" style="left:415px;top:116px;width:21px;height:22px;z-index:60"></div>


</body></html>
